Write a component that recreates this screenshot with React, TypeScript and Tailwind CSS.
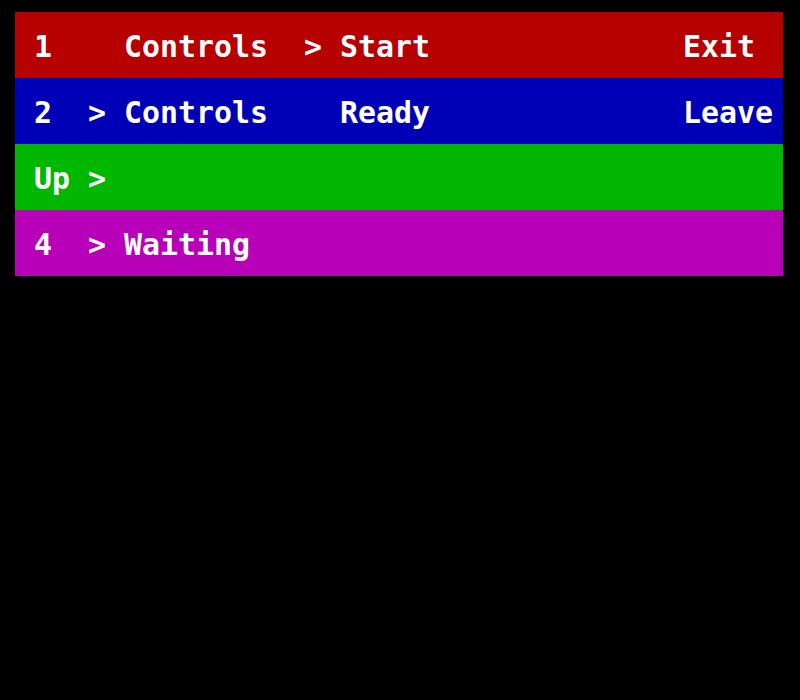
import React from "react";

type Row = { bg: string; left: string; right?: string };

const rows: Row[] = [
  { bg: "bg-[#b70000]", left: "1    Controls  > Start", right: "Exit" },
  { bg: "bg-[#0000b7]", left: "2  > Controls    Ready", right: "Leave" },
  { bg: "bg-[#00b700]", left: "Up >" },
  { bg: "bg-[#b700b7]", left: "4  > Waiting" },
];

export default function App() {
  return (
    <div className="w-full h-[700px] bg-black pt-[12px] pl-[15px]">
      <div className="flex flex-col w-[768px]">
        {rows.map((r, i) => (
          <div
            key={i}
            className={`${r.bg} h-[66px] flex items-center pl-[19px] pt-[3px] text-white font-bold text-[29.9px] leading-none`}
            style={{ fontFamily: '"DejaVu Sans Mono", "Liberation Mono", monospace' }}
          >
            <span className="w-[649px] whitespace-pre">{r.left}</span>
            {r.right && <span className="whitespace-pre">{r.right}</span>}
          </div>
        ))}
      </div>
    </div>
  );
}
